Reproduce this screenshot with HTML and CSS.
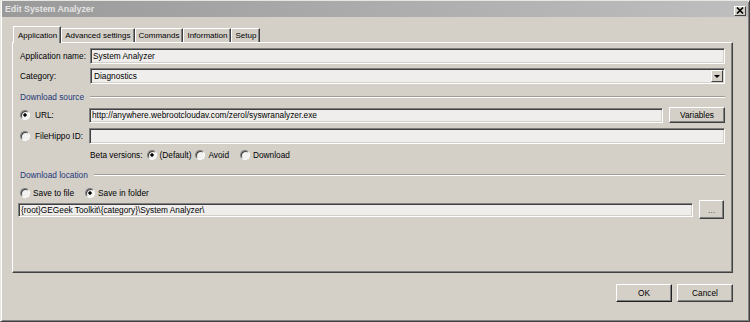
FILE: index.html
```html
<!DOCTYPE html>
<html lang="en">
<head>
<meta charset="UTF-8">
<title>Edit System Analyzer</title>
<link rel="stylesheet" href="styles.css">
</head>
<body>

<div class="window">
  <div class="titlebar">
    <span class="title">Edit System Analyzer</span>
    <span class="close">
      <svg width="8" height="7" viewBox="0 0 8 7"><path d="M1 0.5 L7 6.5 M7 0.5 L1 6.5" stroke="#000" stroke-width="1.6"/></svg>
    </span>
  </div>

  <div class="client">
    <div class="tabs">
      <div class="tab active">Application</div>
      <div class="tab">Advanced settings</div>
      <div class="tab">Commands</div>
      <div class="tab">Information</div>
      <div class="tab">Setup</div>
    </div>

    <div class="panel">
      <div class="row">
        <span class="lbl">Application name:</span>
        <input class="field" type="text" value="System Analyzer">
      </div>
      <div class="row gap4">
        <span class="lbl">Category:</span>
        <div class="field combo">
          <span>Diagnostics</span>
          <span class="arrow"></span>
        </div>
      </div>

      <div class="group first">Download source</div>
      <div class="row gap4">
        <span class="lbl opt"><span class="radio on"></span>URL:</span>
        <input class="field url" type="text" value="http://anywhere.webrootcloudav.com/zerol/syswranalyzer.exe">
        <button class="btn vars">Variables</button>
      </div>
      <div class="row gap5">
        <span class="lbl opt"><span class="radio"></span>FileHippo ID:</span>
        <input class="field" type="text" value="">
      </div>
      <div class="line beta">
        <span>Beta versions:</span>
        <span class="choice"><span class="radio on"></span>(Default)</span>
        <span class="choice"><span class="radio"></span>Avoid</span>
        <span class="choice wide"><span class="radio"></span>Download</span>
      </div>

      <div class="group second">Download location</div>
      <div class="line save">
        <span class="choice"><span class="radio"></span>Save to file</span>
        <span class="choice"><span class="radio on"></span>Save in folder</span>
      </div>
      <div class="row path">
        <input class="field" type="text" value="{root}GEGeek Toolkit\{category}\System Analyzer\">
        <button class="btn dots">...</button>
      </div>
    </div>

    <div class="footer">
      <button class="btn default">OK</button>
      <button class="btn">Cancel</button>
    </div>
  </div>
</div>

</body>
</html>
```

FILE: styles.css
```css
* {
  box-sizing: border-box;
}
body {
  margin: 0;
  background: #d4d0c8;
  font-family: "Liberation Sans", Arial, sans-serif;
  font-size: 8.3px;
  color: #000;
}
.window {
  width: 750px;
  height: 322px;
  border: 1px solid;
  border-color: #e8e6e0 #404040 #404040 #e8e6e0;
  box-shadow: inset 1px 1px #fff, inset -1px -1px #808080;
  padding: 0 1px 1px 1px;
  display: flex;
  flex-direction: column;
}

/* title bar (inactive window) */
.titlebar {
  height: 16px;
  background: linear-gradient(to right, #9a9a9a, #bebebe);
  display: flex;
  align-items: center;
  justify-content: space-between;
  padding: 0 2px 0 3px;
}
.title {
  color: #e4e4e4;
  font-weight: bold;
  font-size: 8.8px;
}
.close {
  width: 12px;
  height: 10px;
  margin-top: 3px;
  background: #d4d0c8;
  border: 1px solid;
  border-color: #fff #404040 #404040 #fff;
  display: flex;
  align-items: center;
  justify-content: center;
}

.client {
  flex: 1;
  padding: 9px 15px 0 10px;
  display: flex;
  flex-direction: column;
}

/* tabs */
.tabs {
  display: flex;
  align-items: flex-end;
  padding-left: 1px;
  font-size: 8px;
}
.tab {
  height: 14px;
  padding: 0 3px;
  display: flex;
  align-items: center;
  border-top: 1px solid #fff;
  border-left: 1px solid #fff;
  border-right: 1px solid #404040;
  box-shadow: inset -1px 0 #808080;
  white-space: nowrap;
}
.tab.active {
  height: 17px;
  margin-bottom: -1px;
  padding: 0 3px 0 4px;
  background: #d4d0c8;
  position: relative;
  z-index: 1;
}

.panel {
  height: 231px;
  border: 1px solid;
  border-color: #fff #404040 #404040 #fff;
  box-shadow: inset -1px -1px #808080;
  padding: 5px 7px 0 7px;
}

/* rows */
.row {
  display: flex;
  align-items: center;
  height: 16px;
}
.gap4 { margin-top: 4px; }
.gap5 { margin-top: 5px; }
.lbl {
  width: 70px;
  flex: none;
  white-space: nowrap;
}
.lbl.opt {
  width: 69px;
  display: flex;
  align-items: center;
}
.lbl.opt .radio {
  margin-right: 5px;
}

.field {
  flex: 1;
  min-width: 0;
  height: 16px;
  margin: 0;
  padding: 0 2px;
  font: inherit;
  color: #000;
  background: #efeeec;
  border: 1px solid;
  border-color: #808080 #fff #fff #808080;
  box-shadow: inset 1px 1px #404040, inset -1px -1px #d4d0c8;
  outline: none;
}
.field.url {
  height: 15px;
}
.combo {
  display: flex;
  align-items: center;
  justify-content: space-between;
  padding: 0 1px 0 3px;
}
.arrow {
  width: 12px;
  height: 12px;
  background: #d4d0c8;
  border: 1px solid;
  border-color: #fff #404040 #404040 #fff;
  display: flex;
  align-items: center;
  justify-content: center;
}
.arrow::after {
  content: "";
  border-left: 3px solid transparent;
  border-right: 3px solid transparent;
  border-top: 3px solid #000;
}

/* group headers with etched rule */
.group {
  display: flex;
  align-items: center;
  height: 12px;
  color: #1c3778;
}
.group::after {
  content: "";
  flex: 1;
  margin-left: 6px;
  border-top: 1px solid #a09c94;
  border-bottom: 1px solid #fff;
}
.group.first { margin-top: 7px; }
.group.second { margin-top: 8px; }

.line {
  display: flex;
  align-items: center;
  height: 12px;
}
.beta {
  margin-top: 5px;
  padding-left: 70px;
}
.beta .choice { margin-left: 4px; }
.beta .choice.wide { margin-left: 11px; }
.save {
  margin-top: 6px;
}
.save .choice + .choice { margin-left: 11px; }
.choice {
  display: flex;
  align-items: center;
}
.choice .radio { margin-right: 3px; }

.radio {
  width: 10px;
  height: 10px;
  flex: none;
  border-radius: 50%;
  border: 1px solid;
  border-color: #808080 #fff #fff #808080;
  background: #f2f2f0;
  box-shadow: inset 1px 1px #404040;
}
.radio.on {
  background: radial-gradient(circle, #000 1.4px, #f2f2f0 1.9px);
}

.path {
  height: 19px;
  margin-top: 1px;
}
.path .field {
  height: 14px;
  margin-left: -2px;
}

/* buttons */
.btn {
  font: inherit;
  color: #000;
  margin: 0;
  padding: 0;
  background: #d4d0c8;
  border: 1px solid;
  border-color: #fff #404040 #404040 #fff;
  box-shadow: inset -1px -1px #808080;
  cursor: pointer;
}
.vars {
  width: 56px;
  height: 16px;
  margin-left: 6px;
}
.dots {
  width: 25px;
  height: 19px;
  margin-left: 6px;
  margin-right: 1px;
  color: #555;
}
.footer {
  display: flex;
  justify-content: flex-end;
  gap: 5px;
  margin-top: 11px;
}
.footer .btn {
  width: 56px;
  height: 18px;
}
.btn.default {
  border-color: #fff #202020 #202020 #fff;
}
```
